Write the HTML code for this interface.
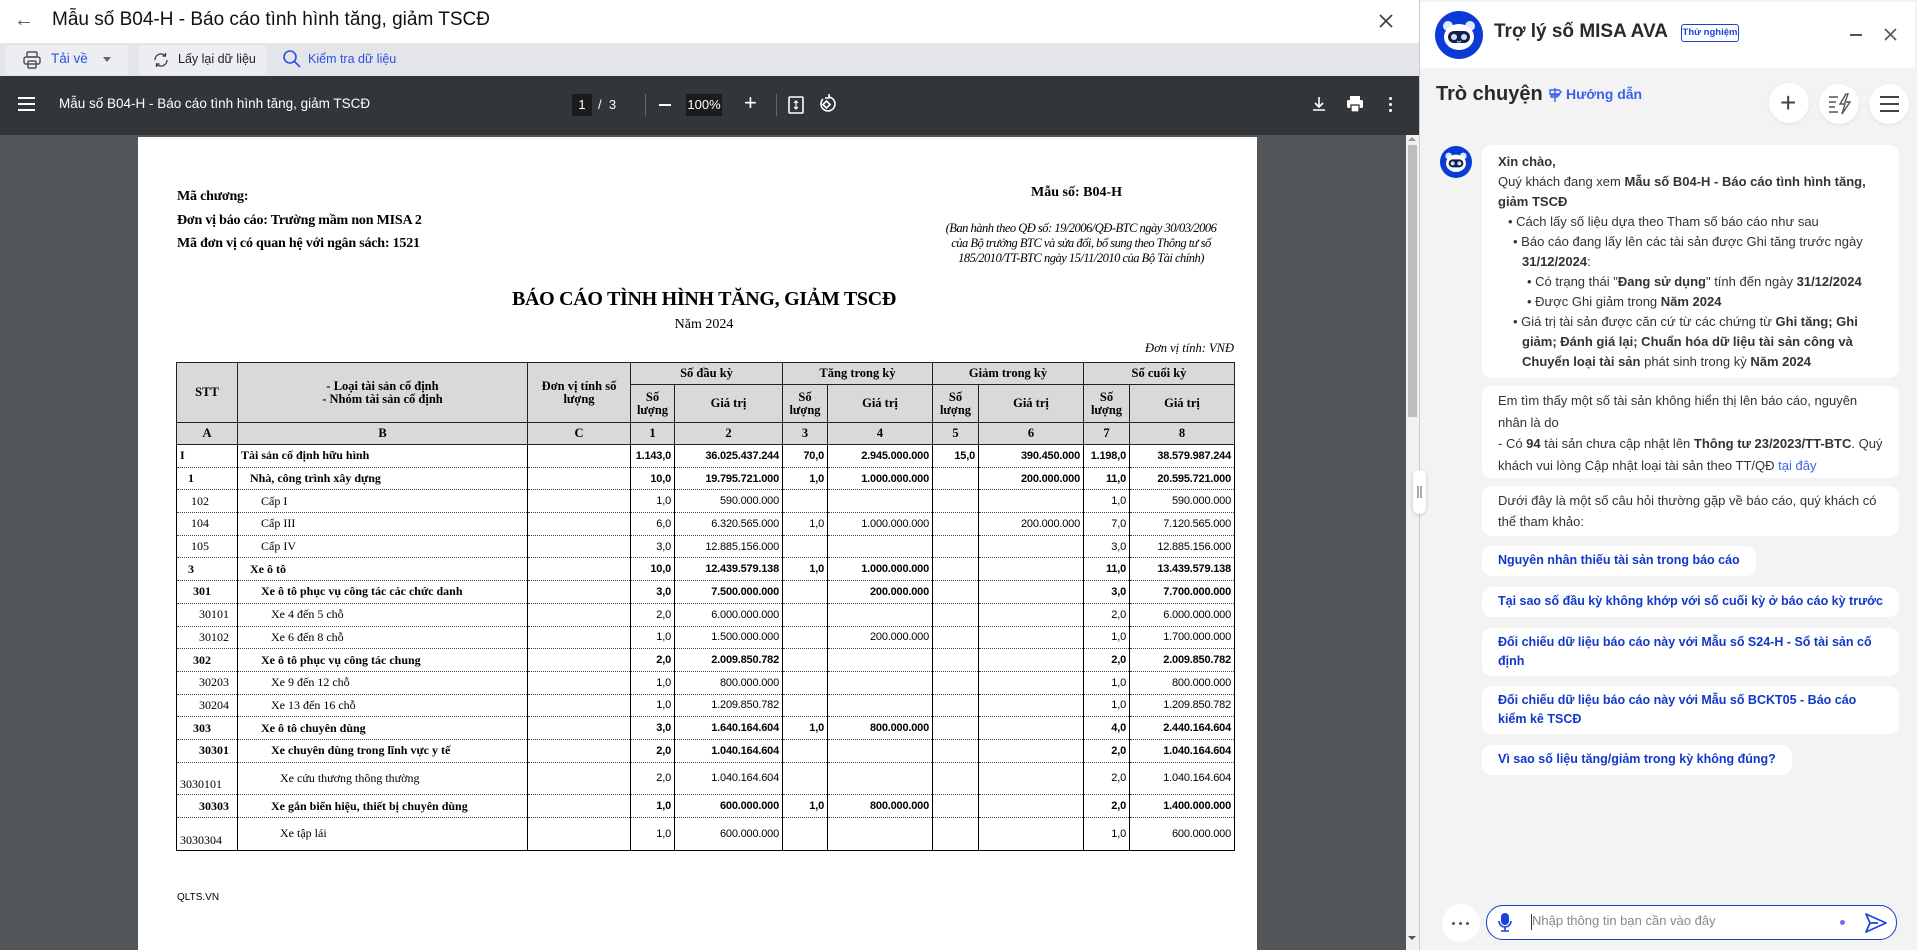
<!DOCTYPE html>
<html><head><meta charset="utf-8">
<style>
*{box-sizing:border-box;margin:0;padding:0}
body{width:1917px;height:950px;overflow:hidden;background:#a0a0a0;font-family:"Liberation Sans",sans-serif;position:relative}
.abs{position:absolute}
.serif{font-family:"Liberation Serif",serif}
table.t{position:absolute;left:176px;top:362px;border-collapse:collapse;table-layout:fixed;font-family:"Liberation Serif",serif;font-size:12px;color:#000}
table.t td{border-left:1.3px solid #000;border-right:1.3px solid #000;padding:0 3px;white-space:nowrap;overflow:hidden}
table.t thead td{background:#d9d9d9;border:1.5px solid #222;text-align:center;font-weight:bold;font-size:12.5px;line-height:13px}
table.t tbody td{border-top:1px dotted #444;border-bottom:1px dotted #444;height:22.7px}
table.t tbody td.n{font-family:"Liberation Sans",sans-serif;font-size:11px;text-align:right;letter-spacing:-0.2px}
table.t tbody tr.b td{font-weight:bold}
table.t tbody tr.tall td{height:32.7px}
table.t tbody tr:last-child td{border-bottom:1.3px solid #000}
.bub{position:absolute;left:1482px;background:#fff;border-radius:10px;font-size:13px;line-height:20px;color:#333;padding:6px 16px}
.q{position:absolute;left:1482px;background:#fff;border-radius:10px;font-size:12.5px;font-weight:bold;color:#1238c9;padding:5px 16px;line-height:19px}
.q1{white-space:nowrap;height:30px}
.cbtn{position:absolute;width:40px;height:40px;border-radius:50%;background:#fff;box-shadow:0 1px 3px rgba(0,0,0,.08)}
</style></head><body>
<div class="abs" style="left:0;top:0;width:1419px;height:43px;background:#fff"></div>
<div class="abs" style="left:14px;top:9px;font-size:20px;color:#555">&#8592;</div>
<div class="abs" style="left:52px;top:9px;font-size:19px;color:#111">Mẫu số B04-H - Báo cáo tình hình tăng, giảm TSCĐ</div>
<svg class="abs" style="left:1378px;top:13px" width="16" height="16" viewBox="0 0 16 16"><path d="M2 2L14 14M14 2L2 14" stroke="#444" stroke-width="1.8"/></svg>
<div class="abs" style="left:0;top:43px;width:1419px;height:33px;background:#e3e5e9"></div>
<div class="abs" style="left:6px;top:45px;width:122px;height:30px;background:#eceef1;border-radius:3px"></div>
<svg class="abs" style="left:22px;top:50px" width="20" height="20" viewBox="0 0 20 20" fill="none" stroke="#555" stroke-width="1.5"><rect x="5" y="2" width="10" height="5" rx="1"/><rect x="2" y="7" width="16" height="7" rx="2"/><rect x="6" y="11" width="8" height="7" rx="1"/></svg>
<div class="abs" style="left:51px;top:51px;font-size:13.5px;color:#2952e3">Tải về</div>
<div class="abs" style="left:103px;top:57px;width:0;height:0;border-left:4px solid transparent;border-right:4px solid transparent;border-top:5px solid #666"></div>
<div class="abs" style="left:138px;top:45px;width:128px;height:30px;background:#eceef1;border-radius:3px"></div>
<svg class="abs" style="left:152px;top:51px" width="18" height="18" viewBox="0 0 18 18" fill="none" stroke="#444" stroke-width="1.4"><path d="M3 9a6 6 0 0 1 10.5-4"/><path d="M13.5 2v3h-3"/><path d="M15 9a6 6 0 0 1-10.5 4"/><path d="M4.5 16v-3h3"/></svg>
<div class="abs" style="left:178px;top:52px;font-size:12.5px;color:#222">Lấy lại dữ liệu</div>
<svg class="abs" style="left:282px;top:49px" width="20" height="20" viewBox="0 0 20 20" fill="none" stroke="#2952e3" stroke-width="1.6"><circle cx="8" cy="8" r="6"/><path d="M12.5 12.5L18 18"/></svg>
<div class="abs" style="left:308px;top:52px;font-size:12.5px;color:#2952e3">Kiểm tra dữ liệu</div>
<div class="abs" style="left:0;top:76px;width:1419px;height:59px;background:#323639"></div>
<div class="abs" style="left:18px;top:97px;width:17px;height:2px;background:#fff;box-shadow:0 6px 0 #fff,0 12px 0 #fff"></div>
<div class="abs" style="left:59px;top:96px;font-size:13.5px;color:#fff">Mẫu số B04-H - Báo cáo tình hình tăng, giảm TSCĐ</div>
<div class="abs" style="left:572px;top:94px;width:20px;height:22px;background:#191b1c;color:#fff;font-size:13px;text-align:center;line-height:22px">1</div>
<div class="abs" style="left:598px;top:97px;color:#fff;font-size:13px">/&nbsp; 3</div>
<div class="abs" style="left:645px;top:94px;width:1px;height:22px;background:#666"></div>
<div class="abs" style="left:659px;top:104px;width:12px;height:2px;background:#fff"></div>
<div class="abs" style="left:686px;top:94px;width:36px;height:22px;background:#191b1c;color:#fff;font-size:13px;text-align:center;line-height:22px">100%</div>
<div class="abs" style="left:744px;top:90px;color:#fff;font-size:22px;font-weight:300">+</div>
<div class="abs" style="left:776px;top:94px;width:1px;height:22px;background:#666"></div>
<svg class="abs" style="left:788px;top:95px" width="16" height="20" viewBox="0 0 16 20" fill="none" stroke="#fff" stroke-width="1.6"><rect x="1" y="2" width="14" height="16" rx="1"/><path d="M8 6v8M6 8l2-2 2 2M6 12l2 2 2-2" stroke-width="1.2"/></svg>
<svg class="abs" style="left:818px;top:93px" width="18" height="22" viewBox="0 0 18 22" fill="none" stroke="#fff" stroke-width="1.6"><path d="M5 6a7 7 0 1 0 6-2"/><path d="M11 1v4H7"/><rect x="6" y="9" width="5" height="5" transform="rotate(45 8.5 11.5)"/></svg>
<svg class="abs" style="left:1311px;top:95px" width="16" height="18" viewBox="0 0 16 18" fill="none" stroke="#fff" stroke-width="1.6"><path d="M8 2v10M4 8l4 4 4-4M2 15h12"/></svg>
<svg class="abs" style="left:1346px;top:95px" width="18" height="18" viewBox="0 0 18 18"><rect x="4" y="1" width="10" height="4" fill="#fff"/><rect x="1" y="5" width="16" height="8" rx="1.5" fill="#fff"/><rect x="5" y="10" width="8" height="7" fill="#fff" stroke="#323639" stroke-width="1.3"/></svg>
<div class="abs" style="left:1389px;top:97px;width:3px;height:3px;background:#fff;border-radius:50%;box-shadow:0 6px 0 #fff,0 12px 0 #fff"></div>
<div class="abs" style="left:0;top:135px;width:1406px;height:815px;background:#525659"></div>
<div class="abs" style="left:1406px;top:135px;width:13px;height:815px;background:#f1f1f1"></div>
<div class="abs" style="left:1408px;top:145px;width:9px;height:272px;background:#bdbdbd"></div>
<div class="abs" style="left:1408px;top:137px;width:0;height:0;border-left:4px solid transparent;border-right:4px solid transparent;border-bottom:4px solid #999"></div>
<div class="abs" style="left:1408px;top:936px;width:0;height:0;border-left:4px solid transparent;border-right:4px solid transparent;border-top:4px solid #555"></div>
<div class="abs" style="left:138px;top:137px;width:1119px;height:813px;background:#fff"></div>
<div class="abs serif" style="left:177px;top:185px;font-size:14px;font-weight:bold;line-height:23.5px;letter-spacing:-0.2px">Mã chương:<br>Đơn vị báo cáo: Trường mầm non MISA 2<br>Mã đơn vị có quan hệ với ngân sách: 1521</div>
<div class="abs serif" style="left:1031px;top:185px;font-size:14px;font-weight:bold">Mẫu số: B04-H</div>
<div class="abs serif" style="left:905px;top:221px;width:352px;font-size:12.5px;font-style:italic;line-height:15px;text-align:center;letter-spacing:-0.5px">(Ban hành theo QĐ số: 19/2006/QĐ-BTC ngày 30/03/2006<br>của Bộ trưởng BTC và sửa đổi, bổ sung theo Thông tư số<br>185/2010/TT-BTC ngày 15/11/2010 của Bộ Tài chính)</div>
<div class="abs serif" style="left:404px;top:288px;width:600px;text-align:center;font-size:20px;font-weight:bold;letter-spacing:-0.3px">BÁO CÁO TÌNH HÌNH TĂNG, GIẢM TSCĐ</div>
<div class="abs serif" style="left:604px;top:317px;width:200px;text-align:center;font-size:14px">Năm 2024</div>
<div class="abs serif" style="left:1034px;top:341px;width:200px;text-align:right;font-size:12.5px;font-style:italic">Đơn vị tính: VNĐ</div>
<table class="t">
<colgroup><col style="width:61px"><col style="width:290px"><col style="width:103px"><col style="width:44px"><col style="width:108px"><col style="width:45px"><col style="width:105px"><col style="width:46px"><col style="width:105px"><col style="width:46px"><col style="width:105px"></colgroup>
<thead>
<tr style="height:22px"><td rowspan="2">STT</td><td rowspan="2">- Loại tài sản cố định<br>- Nhóm tài sản cố định</td><td rowspan="2">Đơn vị tính số<br>lượng</td><td colspan="2">Số đầu kỳ</td><td colspan="2">Tăng trong kỳ</td><td colspan="2">Giảm trong kỳ</td><td colspan="2">Số cuối kỳ</td></tr>
<tr style="height:38px"><td>Số<br>lượng</td><td>Giá trị</td><td>Số<br>lượng</td><td>Giá trị</td><td>Số<br>lượng</td><td>Giá trị</td><td>Số<br>lượng</td><td>Giá trị</td></tr>
<tr style="height:22px"><td>A</td><td>B</td><td>C</td><td>1</td><td>2</td><td>3</td><td>4</td><td>5</td><td>6</td><td>7</td><td>8</td></tr>
</thead>
<tbody>
<tr class="b"><td>I</td><td>Tài sản cố định hữu hình</td><td></td><td class="n">1.143,0</td><td class="n">36.025.437.244</td><td class="n">70,0</td><td class="n">2.945.000.000</td><td class="n">15,0</td><td class="n">390.450.000</td><td class="n">1.198,0</td><td class="n">38.579.987.244</td></tr>
<tr class="b"><td style="padding-left:11px">1</td><td style="padding-left:12px">Nhà, công trình xây dựng</td><td></td><td class="n">10,0</td><td class="n">19.795.721.000</td><td class="n">1,0</td><td class="n">1.000.000.000</td><td></td><td class="n">200.000.000</td><td class="n">11,0</td><td class="n">20.595.721.000</td></tr>
<tr><td style="padding-left:14px">102</td><td style="padding-left:23px">Cấp I</td><td></td><td class="n">1,0</td><td class="n">590.000.000</td><td></td><td></td><td></td><td></td><td class="n">1,0</td><td class="n">590.000.000</td></tr>
<tr><td style="padding-left:14px">104</td><td style="padding-left:23px">Cấp III</td><td></td><td class="n">6,0</td><td class="n">6.320.565.000</td><td class="n">1,0</td><td class="n">1.000.000.000</td><td></td><td class="n">200.000.000</td><td class="n">7,0</td><td class="n">7.120.565.000</td></tr>
<tr><td style="padding-left:14px">105</td><td style="padding-left:23px">Cấp IV</td><td></td><td class="n">3,0</td><td class="n">12.885.156.000</td><td></td><td></td><td></td><td></td><td class="n">3,0</td><td class="n">12.885.156.000</td></tr>
<tr class="b"><td style="padding-left:11px">3</td><td style="padding-left:12px">Xe ô tô</td><td></td><td class="n">10,0</td><td class="n">12.439.579.138</td><td class="n">1,0</td><td class="n">1.000.000.000</td><td></td><td></td><td class="n">11,0</td><td class="n">13.439.579.138</td></tr>
<tr class="b"><td style="padding-left:16px">301</td><td style="padding-left:23px">Xe ô tô phục vụ công tác các chức danh</td><td></td><td class="n">3,0</td><td class="n">7.500.000.000</td><td></td><td class="n">200.000.000</td><td></td><td></td><td class="n">3,0</td><td class="n">7.700.000.000</td></tr>
<tr><td style="padding-left:22px">30101</td><td style="padding-left:33px">Xe 4 đến 5 chỗ</td><td></td><td class="n">2,0</td><td class="n">6.000.000.000</td><td></td><td></td><td></td><td></td><td class="n">2,0</td><td class="n">6.000.000.000</td></tr>
<tr><td style="padding-left:22px">30102</td><td style="padding-left:33px">Xe 6 đến 8 chỗ</td><td></td><td class="n">1,0</td><td class="n">1.500.000.000</td><td></td><td class="n">200.000.000</td><td></td><td></td><td class="n">1,0</td><td class="n">1.700.000.000</td></tr>
<tr class="b"><td style="padding-left:16px">302</td><td style="padding-left:23px">Xe ô tô phục vụ công tác chung</td><td></td><td class="n">2,0</td><td class="n">2.009.850.782</td><td></td><td></td><td></td><td></td><td class="n">2,0</td><td class="n">2.009.850.782</td></tr>
<tr><td style="padding-left:22px">30203</td><td style="padding-left:33px">Xe 9 đến 12 chỗ</td><td></td><td class="n">1,0</td><td class="n">800.000.000</td><td></td><td></td><td></td><td></td><td class="n">1,0</td><td class="n">800.000.000</td></tr>
<tr><td style="padding-left:22px">30204</td><td style="padding-left:33px">Xe 13 đến 16 chỗ</td><td></td><td class="n">1,0</td><td class="n">1.209.850.782</td><td></td><td></td><td></td><td></td><td class="n">1,0</td><td class="n">1.209.850.782</td></tr>
<tr class="b"><td style="padding-left:16px">303</td><td style="padding-left:23px">Xe ô tô chuyên dùng</td><td></td><td class="n">3,0</td><td class="n">1.640.164.604</td><td class="n">1,0</td><td class="n">800.000.000</td><td></td><td></td><td class="n">4,0</td><td class="n">2.440.164.604</td></tr>
<tr class="b"><td style="padding-left:22px">30301</td><td style="padding-left:33px">Xe chuyên dùng trong lĩnh vực y tế</td><td></td><td class="n">2,0</td><td class="n">1.040.164.604</td><td></td><td></td><td></td><td></td><td class="n">2,0</td><td class="n">1.040.164.604</td></tr>
<tr class="tall"><td style="vertical-align:bottom;padding-bottom:2px">3030101</td><td style="padding-left:42px">Xe cứu thương thông thường</td><td></td><td class="n">2,0</td><td class="n">1.040.164.604</td><td></td><td></td><td></td><td></td><td class="n">2,0</td><td class="n">1.040.164.604</td></tr>
<tr class="b"><td style="padding-left:22px">30303</td><td style="padding-left:33px">Xe gắn biển hiệu, thiết bị chuyên dùng</td><td></td><td class="n">1,0</td><td class="n">600.000.000</td><td class="n">1,0</td><td class="n">800.000.000</td><td></td><td></td><td class="n">2,0</td><td class="n">1.400.000.000</td></tr>
<tr class="tall"><td style="vertical-align:bottom;padding-bottom:2px">3030304</td><td style="padding-left:42px">Xe tập lái</td><td></td><td class="n">1,0</td><td class="n">600.000.000</td><td></td><td></td><td></td><td></td><td class="n">1,0</td><td class="n">600.000.000</td></tr>
</tbody></table>
<div class="abs" style="left:177px;top:892px;font-size:10px">QLTS.VN</div>

<div class="abs" style="left:1419px;top:0;width:498px;height:950px;background:#f3f3f3;border-left:1px solid #ccc"></div>
<div class="abs" style="left:1420px;top:2px;width:495px;height:66px;background:#fff"></div>
<svg class="abs" style="left:1435px;top:11px" width="48" height="48" viewBox="0 0 48 48"><circle cx="24" cy="24" r="24" fill="#0a3bd6"/><circle cx="13" cy="15" r="5" fill="#dfe9ff"/><circle cx="35" cy="15" r="5" fill="#dfe9ff"/><ellipse cx="24" cy="26" rx="15" ry="13" fill="#fff"/><rect x="13" y="20" width="22" height="12" rx="6" fill="#14204a"/><circle cx="19" cy="26" r="3" fill="#cfe0ff"/><circle cx="29" cy="26" r="3" fill="#cfe0ff"/><path d="M22 30q2 2 4 0" stroke="#cfe0ff" fill="none" stroke-width="1"/></svg>
<div class="abs" style="left:1494px;top:21px;font-size:19px;font-weight:bold;color:#2a2a2a">Trợ lý số MISA AVA</div>
<div class="abs" style="left:1681px;top:24px;width:58px;height:18px;border:1px solid #1a44d6;border-radius:3px;font-size:9.5px;color:#1a44d6;text-align:center;line-height:16px;font-weight:bold">Thử nghiệm</div>
<div class="abs" style="left:1850px;top:34px;width:12px;height:2px;background:#555"></div>
<svg class="abs" style="left:1884px;top:28px" width="13" height="13" viewBox="0 0 13 13"><path d="M1 1L12 12M12 1L1 12" stroke="#555" stroke-width="1.6"/></svg>
<div class="abs" style="left:1436px;top:83px;font-size:20px;font-weight:bold;color:#2a2a2a">Trò chuyện</div>
<svg class="abs" style="left:1548px;top:87px" width="14" height="16" viewBox="0 0 14 16" fill="none" stroke="#3b63e8" stroke-width="1.4"><path d="M7 1v14M2 3h9l2 2-2 2H2zM3 8h8l-2 2H3z"/></svg>
<div class="abs" style="left:1566px;top:86px;font-size:14px;font-weight:bold;color:#3b63e8">Hướng dẫn</div>
<div class="cbtn" style="left:1769px;top:83px"></div>
<div class="abs" style="left:1780px;top:85px;font-size:28px;color:#444;font-weight:300;line-height:36px">+</div>
<div class="cbtn" style="left:1819px;top:84px"></div>
<svg class="abs" style="left:1828px;top:93px" width="24" height="22" viewBox="0 0 24 22" fill="none" stroke="#555" stroke-width="1.6"><path d="M1 4h9M1 9h7M1 14h6M1 19h9"/><path d="M18 1l-6 10h5l-3 10 8-12h-5l3-8z" stroke-width="1.4"/></svg>
<div class="cbtn" style="left:1869px;top:84px"></div>
<div class="abs" style="left:1880px;top:96px;width:19px;height:2px;background:#444;box-shadow:0 7px 0 #444,0 14px 0 #444"></div>
<svg class="abs" style="left:1440px;top:146px" width="32" height="32" viewBox="0 0 48 48"><circle cx="24" cy="24" r="24" fill="#0a3bd6"/><circle cx="13" cy="15" r="5" fill="#dfe9ff"/><circle cx="35" cy="15" r="5" fill="#dfe9ff"/><ellipse cx="24" cy="26" rx="15" ry="13" fill="#fff"/><rect x="13" y="20" width="22" height="12" rx="6" fill="#14204a"/><circle cx="19" cy="26" r="3" fill="#cfe0ff"/><circle cx="29" cy="26" r="3" fill="#cfe0ff"/></svg>
<div class="bub" style="top:145px;width:417px;height:233px;padding-top:7px">
<b>Xin chào,</b><br>Quý khách đang xem <b>Mẫu số B04-H - Báo cáo tình hình tăng, giảm TSCĐ</b>
<div style="padding-left:10px">• Cách lấy số liệu dựa theo Tham số báo cáo như sau</div>
<div style="padding-left:24px;text-indent:-9px">• Báo cáo đang lấy lên các tài sản được Ghi tăng trước ngày <b>31/12/2024</b>:</div>
<div style="padding-left:38px;text-indent:-9px">• Có trạng thái "<b>Đang sử dụng</b>" tính đến ngày <b>31/12/2024</b></div>
<div style="padding-left:38px;text-indent:-9px">• Được Ghi giảm trong <b>Năm 2024</b></div>
<div style="padding-left:24px;text-indent:-9px">• Giá trị tài sản được căn cứ từ các chứng từ <b>Ghi tăng; Ghi giảm; Đánh giá lại; Chuẩn hóa dữ liệu tài sản công và Chuyển loại tài sản</b> phát sinh trong kỳ <b>Năm 2024</b></div>
</div>
<div class="bub" style="top:386px;width:417px;height:92px;padding-top:4px;line-height:21.5px">Em tìm thấy một số tài sản không hiển thị lên báo cáo, nguyên nhân là do<br>- Có <b>94</b> tài sản chưa cập nhật lên <b>Thông tư 23/2023/TT-BTC</b>. Quý khách vui lòng Cập nhật loại tài sản theo TT/QĐ <span style="color:#3b63e8">tại đây</span></div>
<div class="bub" style="top:486px;width:417px;height:50px;padding-top:4px;line-height:21px">Dưới đây là một số câu hỏi thường gặp về báo cáo, quý khách có thể tham khảo:</div>
<div class="q q1" style="top:546px">Nguyên nhân thiếu tài sản trong báo cáo</div>
<div class="q q1" style="top:587px">Tại sao số đầu kỳ không khớp với số cuối kỳ ở báo cáo kỳ trước</div>
<div class="q" style="top:628px;width:417px;height:48px;padding-top:5px;padding-right:24px;line-height:19px">Đối chiếu dữ liệu báo cáo này với Mẫu số S24-H - Sổ tài sản cố định</div>
<div class="q" style="top:686px;width:417px;height:48px;padding-top:5px;padding-right:14px;line-height:19px">Đối chiếu dữ liệu báo cáo này với Mẫu số BCKT05 - Báo cáo kiểm kê TSCĐ</div>
<div class="q q1" style="top:745px">Vì sao số liệu tăng/giảm trong kỳ không đúng?</div>
<div class="abs" style="left:1413px;top:470px;width:13px;height:44px;background:#fff;border-radius:6px;box-shadow:0 1px 3px rgba(0,0,0,.2)"></div>
<div class="abs" style="left:1417px;top:486px;width:1.5px;height:12px;background:#aaa;box-shadow:3px 0 0 #aaa"></div>
<div class="abs" style="left:1442px;top:904px;width:38px;height:38px;border-radius:50%;background:#fff"></div>
<div class="abs" style="left:1452px;top:922px;width:3px;height:3px;border-radius:50%;background:#555;box-shadow:7px 0 0 #555,14px 0 0 #555"></div>
<div class="abs" style="left:1486px;top:905px;width:411px;height:35px;border:1.5px solid #1a3cc8;border-radius:17px;background:#fff"></div>
<svg class="abs" style="left:1497px;top:912px" width="16" height="20" viewBox="0 0 16 20"><rect x="4" y="1" width="8" height="12" rx="4" fill="#1a44d6"/><path d="M2 9a6 6 0 0 0 12 0M8 15v4M4 19h8" stroke="#1a44d6" stroke-width="1.6" fill="none"/></svg>
<div class="abs" style="left:1531px;top:914px;width:1px;height:16px;background:#333"></div>
<div class="abs" style="left:1532px;top:913px;font-size:13px;color:#888">Nhập thông tin bạn cần vào đây</div>
<div class="abs" style="left:1840px;top:920px;width:5px;height:5px;border-radius:50%;background:#8a5cf0"></div>
<svg class="abs" style="left:1865px;top:913px" width="22" height="20" viewBox="0 0 22 20" fill="none" stroke="#1a44d6" stroke-width="1.7" stroke-linejoin="round"><path d="M1 1l20 9-20 9 4-9z M5 10h8"/></svg>
</body></html>
